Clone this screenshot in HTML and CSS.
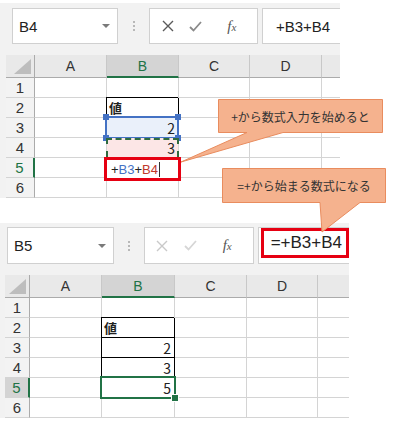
FILE: index.html
```html
<!DOCTYPE html>
<html lang="ja">
<head>
    <meta charset="UTF-8">
    <title>+から始まる数式</title>
    <link rel="stylesheet" href="styles.css">
</head>
<body>
<div class="page">
    <div class="shot shot-top">
        <div class="fbar">
            <div class="namebox"><span>B4</span><i class="caret"></i></div>
            <div class="grip"><i></i></div>
            <div class="fxbox">
                <span class="ico ico-x"><svg width="12" height="12" viewBox="0 0 12 12"><path d="M1 1 L11 11 M11 1 L1 11"/></svg></span>
                <span class="ico ico-ok"><svg width="13" height="11" viewBox="0 0 13 11"><path d="M1 6 L4.5 9.5 L12 1"/></svg></span>
                <span class="ico ico-fx"><i>f<small>x</small></i></span>
            </div>
            <div class="formula">+B3+B4</div>
        </div>
        <div class="sheet">
            <div class="corner"><i class="tri"></i></div>
            <div class="hd">A</div><div class="hd hd-on">B</div><div class="hd">C</div><div class="hd">D</div><div class="hd hd-end"></div>

            <div class="rh">1</div><div class="c"></div><div class="c"></div><div class="c"></div><div class="c"></div><div class="c c-end"></div>
            <div class="rh">2</div><div class="c"></div><div class="c boxed lbl">値</div><div class="c"></div><div class="c"></div><div class="c c-end"></div>
            <div class="rh">3</div><div class="c"></div>
            <div class="c num ref-b3"><span>2</span><i class="ref-blue"><b class="k k1"></b><b class="k k2"></b><b class="k k3"></b><b class="k k4"></b></i></div>
            <div class="c"></div><div class="c"></div><div class="c c-end"></div>
            <div class="rh">4</div><div class="c"></div>
            <div class="c num ref-b4"><span>3</span><i class="ref-dash"></i></div>
            <div class="c"></div><div class="c"></div><div class="c c-end"></div>
            <div class="rh rh-on">5</div><div class="c"></div>
            <div class="c editing"><div class="edit-box"><span class="op">+</span><span class="r-blue">B3</span><span class="op">+</span><span class="r-red">B4</span></div></div>
            <div class="c"></div><div class="c"></div><div class="c c-end"></div>
            <div class="rh">6</div><div class="c"></div><div class="c"></div><div class="c"></div><div class="c"></div><div class="c c-end"></div>
        </div>
    </div>

    <div class="shot shot-bottom">
        <div class="fbar">
            <div class="namebox"><span>B5</span><i class="caret"></i></div>
            <div class="grip"><i></i></div>
            <div class="fxbox off">
                <span class="ico ico-x"><svg width="12" height="12" viewBox="0 0 12 12"><path d="M1 1 L11 11 M11 1 L1 11"/></svg></span>
                <span class="ico ico-ok"><svg width="13" height="11" viewBox="0 0 13 11"><path d="M1 6 L4.5 9.5 L12 1"/></svg></span>
                <span class="ico ico-fx"><i>f<small>x</small></i></span>
            </div>
            <div class="formula"><span class="formula-mark">=+B3+B4</span></div>
        </div>
        <div class="sheet">
            <div class="corner"><i class="tri"></i></div>
            <div class="hd">A</div><div class="hd hd-on">B</div><div class="hd">C</div><div class="hd">D</div><div class="hd hd-end"></div>

            <div class="rh">1</div><div class="c"></div><div class="c"></div><div class="c"></div><div class="c"></div><div class="c c-end"></div>
            <div class="rh">2</div><div class="c"></div><div class="c boxed lbl">値</div><div class="c"></div><div class="c"></div><div class="c c-end"></div>
            <div class="rh">3</div><div class="c"></div><div class="c boxed num"><span>2</span></div><div class="c"></div><div class="c"></div><div class="c c-end"></div>
            <div class="rh">4</div><div class="c"></div><div class="c boxed num"><span>3</span></div><div class="c"></div><div class="c"></div><div class="c c-end"></div>
            <div class="rh rh-on rh-dark">5</div><div class="c"></div>
            <div class="c boxed num active"><span>5</span><i class="act-box"><b class="handle"></b></i></div>
            <div class="c"></div><div class="c"></div><div class="c c-end"></div>
            <div class="rh">6</div><div class="c"></div><div class="c"></div><div class="c"></div><div class="c"></div><div class="c c-end"></div>
        </div>
    </div>

    <!-- callouts lie over both screenshots -->
    <svg class="callouts" width="398" height="422" viewBox="0 0 398 422">
        <path d="M218.5 99.5 H382.5 V132.5 H283 L181 162 L247 132.5 H218.5 Z"/>
        <path d="M222.5 168.5 H385.5 V202.5 H360 L322 232 L320 202.5 H222.5 Z"/>
    </svg>
    <div class="note note-1">+から数式入力を始めると</div>
    <div class="note note-2">=+から始まる数式になる</div>
</div>
</body>
</html>
```

FILE: styles.css
```css
body {
    margin: 0;
    background: #fff;
    font-family: "Noto Sans CJK JP", "Liberation Sans", sans-serif;
    color: #222;
}
.page {
    position: relative;
    width: 398px;
    height: 422px;
    overflow: hidden;
    padding-top: 3px;
    box-sizing: border-box;
}
.shot {
    background: #f2f2f2;
}
.shot-top {
    width: 340px;
    padding-top: 5px;
}
.shot-bottom {
    width: 349px;
    margin-top: 25px;
    padding-top: 4px;
}

/* formula bar */
.fbar {
    display: flex;
    height: 36px;
    margin-bottom: 11px;
}
.shot-top .fbar {
    padding-left: 12px;
}
.shot-bottom .fbar {
    padding-left: 7px;
    height: 37px;
}
.namebox {
    width: 106px;
    box-sizing: border-box;
    background: #fff;
    border: 1px solid #d0d0d0;
    display: flex;
    align-items: center;
    justify-content: space-between;
    padding: 0 7px 0 6px;
    font-family: "Liberation Sans", sans-serif;
    font-size: 15px;
}
.shot-bottom .namebox {
    width: 108px;
}
.caret {
    width: 0;
    height: 0;
    border-left: 4px solid transparent;
    border-right: 4px solid transparent;
    border-top: 4px solid #7a7a7a;
}
.grip {
    width: 31px;
    display: flex;
    align-items: center;
    justify-content: center;
}
.shot-bottom .grip {
    width: 30px;
}
.grip i {
    width: 2px;
    height: 2px;
    margin-top: -8px;
    background: #b8b8b8;
    box-shadow: 0 4px #b8b8b8, 0 8px #b8b8b8;
}
.fxbox {
    width: 109px;
    box-sizing: border-box;
    background: #fff;
    border: 1px solid #d0d0d0;
    display: flex;
    align-items: center;
}
.shot-bottom .fxbox {
    width: 110px;
}
.ico {
    display: flex;
    justify-content: center;
    align-items: center;
}
.ico-x { width: 39px; }
.ico-ok { width: 24px; }
.ico-fx { width: 56px; }
.ico svg path {
    fill: none;
    stroke: #5a5a5a;
    stroke-width: 1.4;
}
.ico-ok svg path {
    stroke: #8a8a8a;
    stroke-width: 1.8;
}
.ico-fx i {
    font-family: "Liberation Serif", serif;
    font-size: 15px;
    color: #555;
}
.ico-fx small {
    font-size: 11px;
}
.fxbox.off .ico svg path {
    stroke: #c9c9c9;
}
.fxbox.off .ico-ok svg path {
    stroke: #d6d6d6;
}
.formula {
    flex: 1;
    margin-left: 4px;
    background: #fff;
    border: 1px solid #d0d0d0;
    border-right: none;
    display: flex;
    align-items: center;
    padding-left: 13px;
    font-family: "Liberation Sans", sans-serif;
    font-size: 15px;
}
.shot-bottom .formula {
    padding-left: 2px;
    align-items: flex-start;
}
.formula-mark {
    margin-top: 0;
    height: 30px;
    box-sizing: border-box;
    border: 3px solid #e60012;
    padding: 0 4px 0 7px;
    font-size: 17px;
    line-height: 24px;
}

/* sheet grid */
.sheet {
    display: grid;
    grid-template-rows: 23px repeat(6, 20px);
    background: #fff;
}
.shot-top .sheet {
    margin-left: 6px;
    grid-template-columns: 29px 72px 72px 71px 72px 18px;
}
.shot-bottom .sheet {
    margin-left: 5px;
    grid-template-columns: 25px 72px 73px 72px 71px 31px;
}
.corner, .hd {
    background: #e9e9e9;
    border-right: 1px solid #c8c8c8;
    border-bottom: 1px solid #ababab;
    box-sizing: border-box;
}
.corner {
    display: flex;
    justify-content: flex-end;
    align-items: flex-end;
    padding: 0 3px 3px 0;
    border-right-color: #ababab;
}
.tri {
    width: 0;
    height: 0;
    border-left: 17px solid transparent;
    border-bottom: 15px solid #bdbdbd;
}
.hd {
    display: flex;
    align-items: center;
    justify-content: center;
    font-family: "Liberation Sans", sans-serif;
    font-size: 14px;
    color: #333;
}
.hd-on {
    background: #d4d4d4;
    border-bottom: 2px solid #217346;
    color: #217346;
}
.hd-end {
    border-right: none;
}
.rh {
    background: #f3f3f3;
    border-right: 1px solid #ababab;
    border-bottom: 1px solid #d4d4d4;
    box-sizing: border-box;
    display: flex;
    align-items: center;
    justify-content: center;
    font-family: "Liberation Sans", sans-serif;
    font-size: 15px;
    color: #333;
}
.rh-on {
    border-right: 2px solid #217346;
    color: #217346;
}
.rh-dark {
    background: #d4d4d4;
}
.c {
    border-right: 1px solid #d4d4d4;
    border-bottom: 1px solid #d4d4d4;
    box-sizing: border-box;
    font-size: 13px;
    display: flex;
    align-items: center;
}
.c-end {
    border-right: none;
}
.boxed {
    border-right-color: #000;
    border-bottom-color: #000;
    box-shadow: -1px -1px 0 #000;
}
.lbl {
    font-weight: bold;
    padding-left: 2px;
}
.num {
    justify-content: flex-end;
    padding-right: 3px;
    font-size: 14px;
}

/* references while typing the formula */
.ref-b3 {
    position: relative;
    background: #eaf0fa;
}
.ref-blue {
    position: absolute;
    top: -2px;
    left: -2px;
    right: -1px;
    bottom: -2px;
    border: 2px solid #4472c4;
}
.k {
    position: absolute;
    width: 6px;
    height: 6px;
    background: #4472c4;
}
.k1 { top: -4px; left: -4px; }
.k2 { top: -4px; right: -4px; }
.k3 { bottom: -4px; left: -4px; }
.k4 { bottom: -4px; right: -4px; }
.ref-b4 {
    position: relative;
    background: #fce6e6;
}
.ref-dash {
    position: absolute;
    top: 0;
    left: -1px;
    right: -1px;
    bottom: 0;
    border: 2px dashed #2f6b3e;
    border-bottom: none;
}
.editing {
    position: relative;
}
.edit-box {
    position: absolute;
    top: -1px;
    left: -3px;
    right: -3px;
    bottom: -4px;
    border: 3px solid #e60012;
    background: #fff;
    display: flex;
    align-items: center;
    padding-left: 4px;
    font-family: "Liberation Sans", sans-serif;
    font-size: 13px;
}
.r-blue { color: #4472c4; }
.r-red {
    color: #c0392b;
    padding-right: 1px;
    border-right: 1px solid #333;
}
.active {
    position: relative;
}
.act-box {
    position: absolute;
    top: -2px;
    left: -2px;
    right: -2px;
    bottom: -2px;
    border: 2px solid #217346;
}
.handle {
    position: absolute;
    right: -5px;
    bottom: -5px;
    width: 6px;
    height: 6px;
    background: #217346;
    border: 1px solid #fff;
}

/* callouts */
.callouts {
    position: absolute;
    top: 0;
    left: 0;
}
.callouts path {
    fill: #f5b28e;
    stroke: #e98c5e;
    stroke-width: 1;
}
.note {
    position: absolute;
    display: flex;
    align-items: center;
    justify-content: center;
    font-size: 12px;
    color: #333;
}
.note-1 {
    left: 219px;
    top: 100px;
    width: 163px;
    height: 32px;
}
.note-2 {
    left: 223px;
    top: 169px;
    width: 162px;
    height: 33px;
}
```
